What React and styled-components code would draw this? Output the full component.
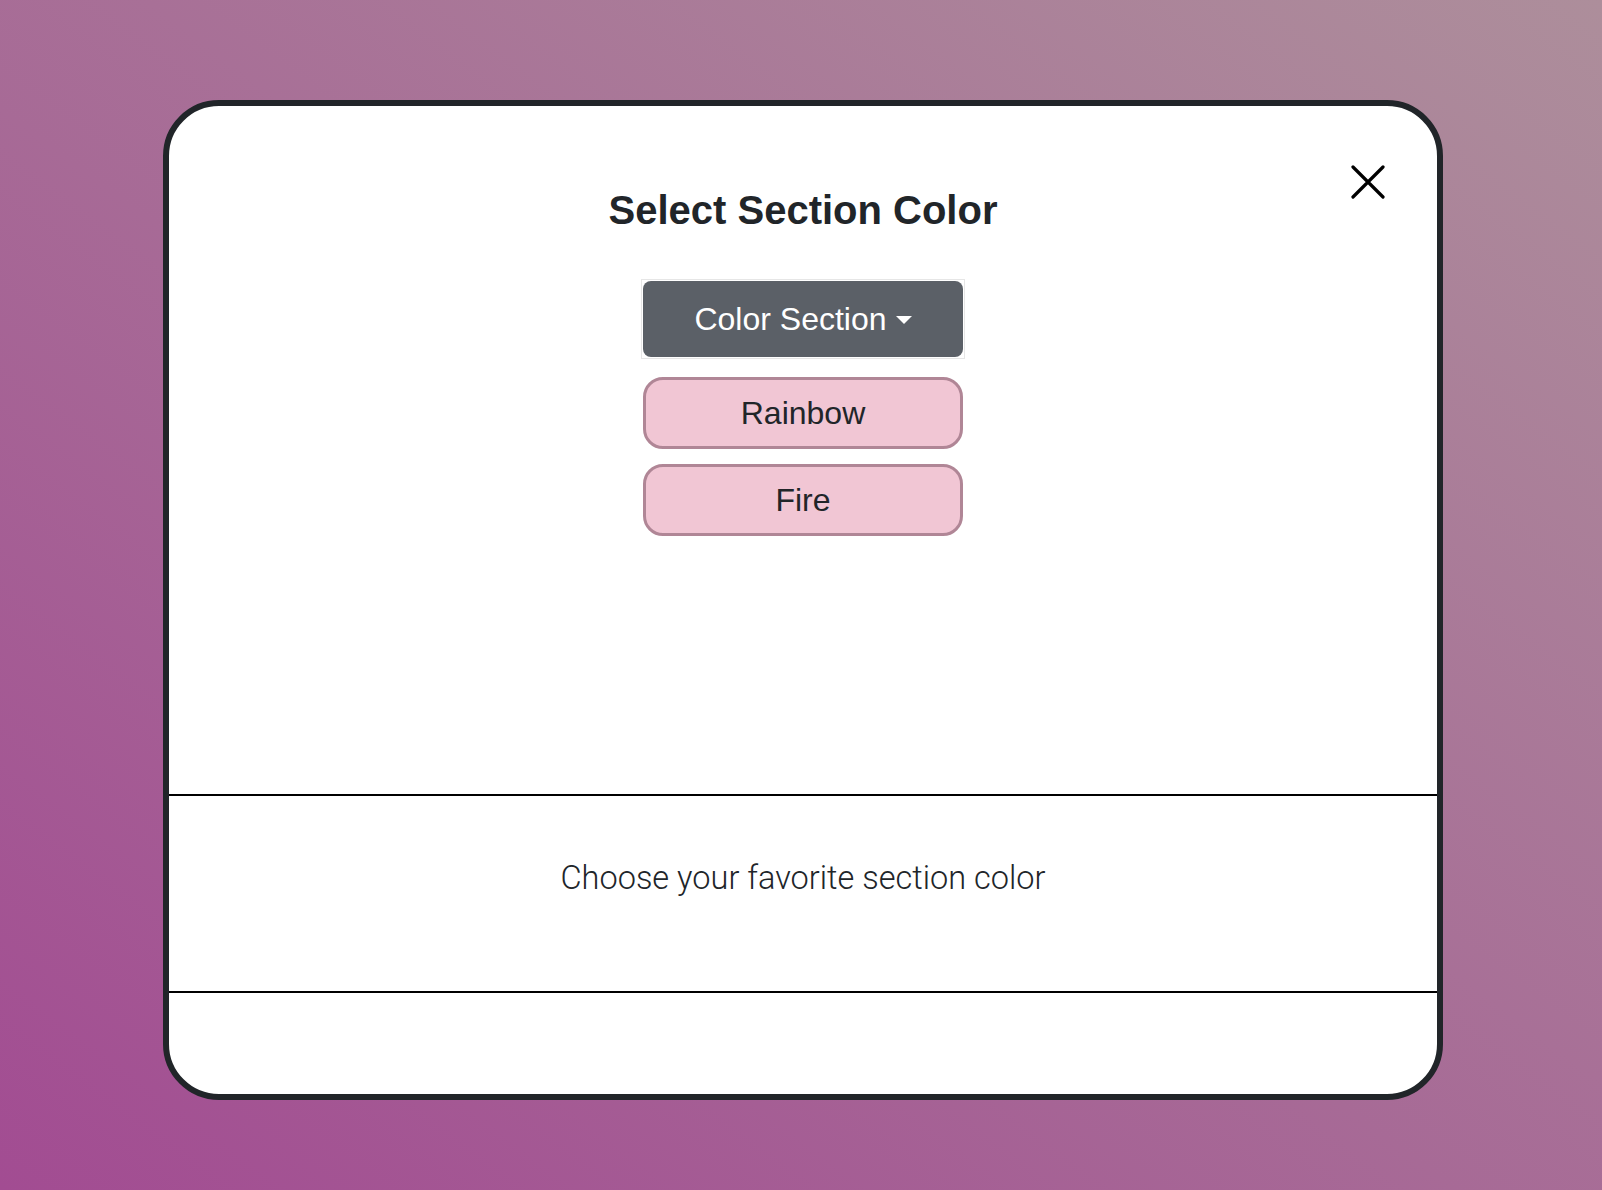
import React from 'react';
import styled, { createGlobalStyle } from 'styled-components';

const GlobalStyle = createGlobalStyle`
  html, body {
    margin: 0;
    padding: 0;
  }
  body {
    font-family: "Liberation Sans", Arial, sans-serif;
  }
`;

const Page = styled.div`
  min-height: 1190px;
  box-sizing: border-box;
  padding: 100px 159px 0 163px;
  background: linear-gradient(to top right, #a24c92, #ad8e9b);
`;

const Modal = styled.div`
  height: 1000px;
  box-sizing: border-box;
  border: 6px solid #212529;
  border-radius: 56px;
  background: #fff;
  display: flex;
  flex-direction: column;
  overflow: hidden;
`;

const Top = styled.div`
  height: 689px;
  display: flex;
  flex-direction: column;
  align-items: center;
`;

const Header = styled.div`
  width: 100%;
  display: grid;
  grid-template-columns: 1fr auto 1fr;
`;

const Title = styled.h2`
  grid-column: 2;
  margin: 80px 0 0;
  font-size: 40px;
  line-height: 48px;
  font-weight: 700;
  color: #212529;
`;

const CloseButton = styled.button`
  grid-column: 3;
  justify-self: end;
  align-self: start;
  margin: 59px 52px 0 0;
  width: 34px;
  height: 34px;
  padding: 0;
  border: none;
  background: none;
  cursor: pointer;
`;

const DropdownWrap = styled.div`
  margin-top: 45px;
  padding: 1px;
  border: 1px solid #e6e6e6;
`;

const DropdownToggle = styled.button`
  width: 320px;
  height: 76px;
  border: none;
  border-radius: 8px;
  background: #5b6067;
  color: #fff;
  font-family: "Liberation Sans", Arial, sans-serif;
  font-size: 32px;
  display: flex;
  align-items: center;
  justify-content: center;
  gap: 9px;
  cursor: pointer;
`;

const Caret = styled.span`
  width: 0;
  height: 0;
  border-left: 8px solid transparent;
  border-right: 8px solid transparent;
  border-top: 8px solid #fff;
  margin-top: 2px;
`;

const OptionList = styled.div`
  margin-top: 18px;
  display: flex;
  flex-direction: column;
  gap: 15px;
`;

const Option = styled.button`
  width: 320px;
  height: 72px;
  box-sizing: border-box;
  border: 3px solid #b08696;
  border-radius: 20px;
  background: #f1c6d4;
  color: #212529;
  font-family: "Liberation Sans", Arial, sans-serif;
  font-size: 32px;
  cursor: pointer;
`;

const Section = styled.div`
  border-top: 2px solid #000;
  height: ${(p) => p.h}px;
  display: flex;
  justify-content: center;
`;

const Note = styled.p`
  margin: 62px 0 0;
  font-family: Roboto, "Liberation Sans", sans-serif;
  font-weight: 300;
  font-size: 32.5px;
  line-height: 40px;
  color: #212529;
`;

const CloseIcon = () => (
  <svg width="34" height="34" viewBox="0 0 34 34">
    <path d="M2 2 L32 32 M32 2 L2 32" stroke="#000" strokeWidth="3.2" strokeLinecap="round" />
  </svg>
);

const App = () => {
  const colors = ['Rainbow', 'Fire'];

  return (
    <Page>
      <GlobalStyle />
      <Modal>
        <Top>
          <Header>
            <Title>Select Section Color</Title>
            <CloseButton aria-label="Close">
              <CloseIcon />
            </CloseButton>
          </Header>
          <DropdownWrap>
            <DropdownToggle>
              Color Section
              <Caret />
            </DropdownToggle>
          </DropdownWrap>
          <OptionList>
            {colors.map((c) => (
              <Option key={c}>{c}</Option>
            ))}
          </OptionList>
        </Top>
        <Section h={196}>
          <Note>Choose your favorite section color</Note>
        </Section>
        <Section h={101} />
      </Modal>
    </Page>
  );
};

export default App;
